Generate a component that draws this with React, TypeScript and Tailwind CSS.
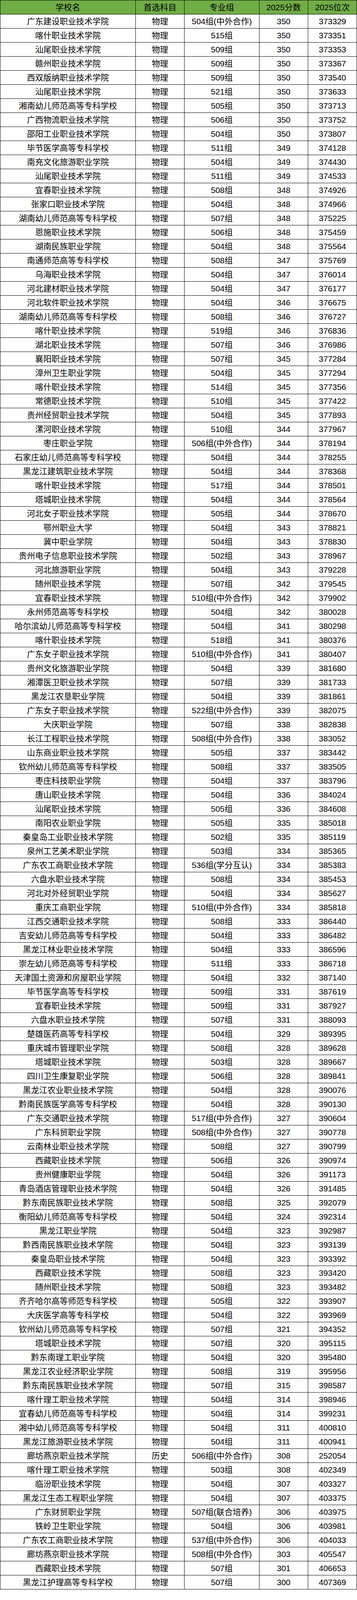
const raw = `广东建设职业技术学院|物理|504组(中外合作)|350|373329
喀什职业技术学院|物理|515组|350|373351
汕尾职业技术学院|物理|509组|350|373353
赣州职业技术学院|物理|509组|350|373367
西双版纳职业技术学院|物理|509组|350|373540
汕尾职业技术学院|物理|521组|350|373633
湘南幼儿师范高等专科学校|物理|505组|350|373713
广西物流职业技术学院|物理|506组|350|373752
邵阳工业职业技术学院|物理|504组|350|373807
毕节医学高等专科学校|物理|511组|349|374128
南充文化旅游职业学院|物理|504组|349|374430
汕尾职业技术学院|物理|511组|349|374533
宜春职业技术学院|物理|508组|348|374926
张家口职业技术学院|物理|504组|348|374966
湖南幼儿师范高等专科学校|物理|507组|348|375225
恩施职业技术学院|物理|506组|348|375459
湖南民族职业学院|物理|504组|348|375564
南通师范高等专科学校|物理|508组|347|375769
乌海职业技术学院|物理|504组|347|376014
河北建材职业技术学院|物理|504组|347|376177
河北软件职业技术学院|物理|504组|346|376675
湖南幼儿师范高等专科学校|物理|508组|346|376727
喀什职业技术学院|物理|519组|346|376836
湖北职业技术学院|物理|507组|346|376986
襄阳职业技术学院|物理|507组|345|377284
漳州卫生职业学院|物理|504组|345|377294
喀什职业技术学院|物理|514组|345|377356
常德职业技术学院|物理|510组|345|377422
贵州经贸职业技术学院|物理|504组|345|377893
漯河职业技术学院|物理|510组|344|377967
枣庄职业学院|物理|506组(中外合作)|344|378194
石家庄幼儿师范高等专科学校|物理|504组|344|378255
黑龙江建筑职业技术学院|物理|504组|344|378368
喀什职业技术学院|物理|517组|344|378501
塔城职业技术学院|物理|504组|344|378564
河北女子职业技术学院|物理|505组|344|378670
鄂州职业大学|物理|504组|343|378821
冀中职业学院|物理|504组|343|378830
贵州电子信息职业技术学院|物理|502组|343|378967
河北旅游职业学院|物理|504组|343|379228
随州职业技术学院|物理|507组|342|379545
宜春职业技术学院|物理|510组(中外合作)|342|379902
永州师范高等专科学校|物理|504组|342|380028
哈尔滨幼儿师范高等专科学校|物理|504组|341|380298
喀什职业技术学院|物理|518组|341|380376
广东女子职业技术学院|物理|510组(中外合作)|341|380407
贵州文化旅游职业学院|物理|504组|339|381680
湘潭医卫职业技术学院|物理|507组|339|381733
黑龙江农垦职业学院|物理|504组|339|381861
广东女子职业技术学院|物理|522组(中外合作)|339|382075
大庆职业学院|物理|507组|338|382838
长江工程职业技术学院|物理|508组(中外合作)|338|383052
山东商业职业技术学院|物理|505组|337|383442
钦州幼儿师范高等专科学校|物理|508组|337|383505
枣庄科技职业学院|物理|504组|337|383796
唐山职业技术学院|物理|504组|336|384024
汕尾职业技术学院|物理|505组|336|384608
南阳农业职业学院|物理|505组|335|385018
秦皇岛工业职业技术学院|物理|502组|335|385119
泉州工艺美术职业学院|物理|503组|334|385365
广东农工商职业技术学院|物理|536组(学分互认)|334|385383
六盘水职业技术学院|物理|508组|334|385453
河北对外经贸职业学院|物理|504组|334|385627
重庆工商职业学院|物理|510组(中外合作)|334|385818
江西交通职业技术学院|物理|508组|333|386440
吉安幼儿师范高等专科学校|物理|504组|333|386482
黑龙江林业职业技术学院|物理|504组|333|386596
崇左幼儿师范高等专科学校|物理|511组|333|386718
天津国土资源和房屋职业学院|物理|504组|332|387140
毕节医学高等专科学校|物理|509组|331|387619
宜春职业技术学院|物理|509组|331|387927
六盘水职业技术学院|物理|507组|331|388093
楚雄医药高等专科学校|物理|504组|329|389395
重庆城市管理职业学院|物理|508组|328|389628
塔城职业技术学院|物理|503组|328|389667
四川卫生康复职业学院|物理|506组|328|389841
黑龙江农业职业技术学院|物理|504组|328|390076
黔南民族医学高等专科学校|物理|504组|328|390130
广东交通职业技术学院|物理|517组(中外合作)|327|390604
广东科贸职业学院|物理|508组(中外合作)|327|390778
云南林业职业技术学院|物理|508组|327|390799
西藏职业技术学院|物理|506组|326|390974
贵州健康职业学院|物理|504组|326|391173
青岛酒店管理职业技术学院|物理|504组|326|391485
黔东南民族职业技术学院|物理|508组|325|392079
衡阳幼儿师范高等专科学校|物理|504组|324|392314
黑龙江职业学院|物理|504组|323|392987
黔西南民族职业技术学院|物理|504组|323|393139
秦皇岛职业技术学院|物理|504组|323|393392
西藏职业技术学院|物理|508组|323|393420
随州职业技术学院|物理|508组|323|393482
齐齐哈尔高等师范专科学校|物理|505组|322|393907
大庆医学高等专科学校|物理|504组|322|393969
钦州幼儿师范高等专科学校|物理|507组|321|394352
塔城职业技术学院|物理|507组|320|395115
黔东南理工职业学院|物理|504组|320|395480
黑龙江农业经济职业学院|物理|508组|319|395956
黔东南民族职业技术学院|物理|507组|315|398587
喀什理工职业技术学院|物理|504组|314|398946
宜春幼儿师范高等专科学校|物理|504组|314|399231
湘中幼儿师范高等专科学校|物理|504组|311|400810
黑龙江旅游职业技术学院|物理|504组|311|400941
廊坊燕京职业技术学院|历史|506组(中外合作)|308|252054
喀什理工职业技术学院|物理|503组|308|402349
临汾职业技术学院|物理|504组|307|403327
黑龙江生态工程职业学院|物理|504组|307|403375
广东财贸职业学院|物理|507组(联合培养)|306|403975
铁岭卫生职业学院|物理|504组|306|403981
广东农工商职业技术学院|物理|537组(中外合作)|306|404033
廊坊燕京职业技术学院|物理|508组(中外合作)|303|405547
西藏职业技术学院|物理|507组|301|406653
黑龙江护理高等专科学校|物理|507组|300|407369`;

const rows = raw.split("\n").map((line) => line.split("|"));
const head = ["学校名", "首选科目", "专业组", "2025分数", "2025位次"];

// the capture stops near 4096px, so rows are a little shorter than 40px to keep all 112 in view
export default function App() {
  return (
    <div className="w-[915px] bg-white font-['Liberation_Sans','Noto_Sans_CJK_SC',sans-serif] text-[21px] leading-none text-black">
      <div className="grid grid-cols-[346px_124px_191px_124px_124px] gap-px bg-black p-px">
        {head.map((h) => (
          <div key={h} className="flex h-[35px] items-center justify-center overflow-hidden bg-[#70ad47] whitespace-nowrap">
            {h}
          </div>
        ))}
        {rows.map((r, i) =>
          r.map((c, j) => (
            <div key={i + "-" + j} className="flex h-[35px] items-center justify-center overflow-hidden bg-white whitespace-nowrap">
              {c}
            </div>
          ))
        )}
      </div>
    </div>
  );
}
